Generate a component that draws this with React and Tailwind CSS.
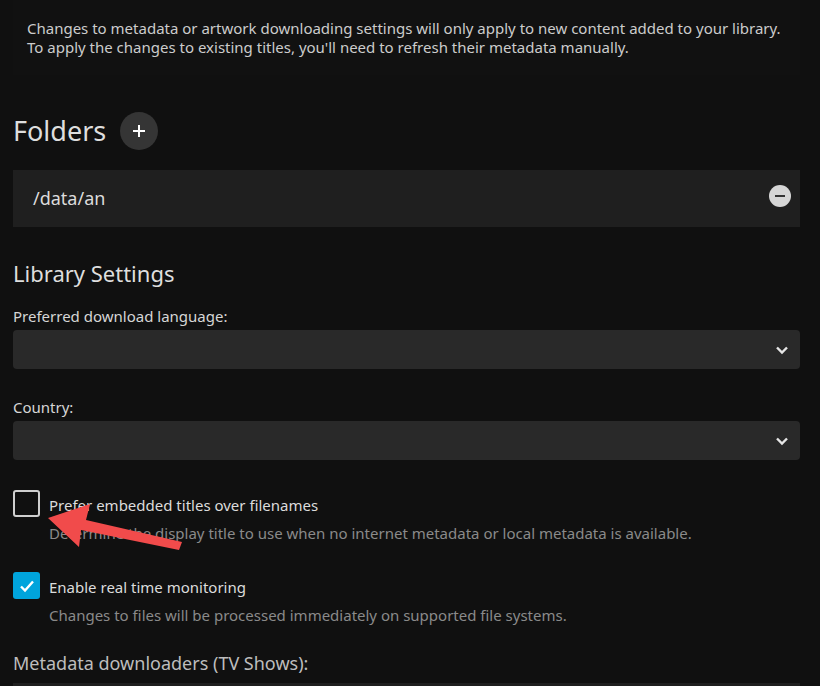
import { useState } from "react";

function Chevron() {
  return (
    <svg width="14" height="10" viewBox="0 0 14 10" className="text-[#e6e6e6]">
      <path d="M2 2.5l5 5 5-5" fill="none" stroke="currentColor" strokeWidth="2.4" />
    </svg>
  );
}

function SelectBox({ label, className = "" }) {
  return (
    <div className={className}>
      <div className="text-[15px] leading-[20px] text-[#d6d6d6]">{label}</div>
      <div className="mt-1 flex h-[39px] items-center justify-end rounded-[4px] bg-[#292929] pr-[11px]">
        <Chevron />
      </div>
    </div>
  );
}

function CheckRow({ checked, onToggle, label, desc, className = "" }) {
  return (
    <div className={className}>
      <div className="flex items-start gap-[9px]">
        <button
          type="button"
          onClick={onToggle}
          className={
            checked
              ? "flex h-[27px] w-[27px] shrink-0 items-center justify-center rounded-[3px] bg-[#00a4dc]"
              : "h-[27px] w-[27px] shrink-0 rounded-[3px] border-2 border-[#cfcfcf]"
          }
        >
          {checked && (
            <svg width="18" height="18" viewBox="0 0 18 18">
              <path d="M3 9.5l4 4 8-9" fill="none" stroke="white" strokeWidth="2.4" />
            </svg>
          )}
        </button>
        <div className="pt-[5px]">
          <div className="text-[15px] leading-[20px] text-[#dcdcdc]">{label}</div>
          <div className="mt-[8px] text-[15px] leading-[20px] text-[#8a8a8a]">{desc}</div>
        </div>
      </div>
    </div>
  );
}

export default function App() {
  const [embedded, setEmbedded] = useState(false);
  const [realtime, setRealtime] = useState(true);

  return (
    <div
      className="relative h-[686px] w-[820px] overflow-hidden bg-[#101010] text-[#dddddd]"
      style={{ fontFamily: '"Noto Sans", sans-serif' }}
    >
      <div className="mx-[13px] w-[787px] bg-[#111111] px-[14px] pt-[19px] pb-[18px] text-[15px] leading-[19px] text-[#cccccc]">
        <p>Changes to metadata or artwork downloading settings will only apply to new content added to your library.</p>
        <p>To apply the changes to existing titles, you'll need to refresh their metadata manually.</p>
      </div>

      <div className="px-[13px] pr-[20px]">
        <div className="mt-[37px] flex items-center gap-[14px]">
          <h2 className="text-[27px] leading-[38px] text-[#dedede]">Folders</h2>
          <button
            type="button"
            className="flex h-[38px] w-[38px] items-center justify-center rounded-full bg-[#353535] text-white"
          >
            <svg width="14" height="14" viewBox="0 0 14 14">
              <path d="M7 1v12M1 7h12" stroke="currentColor" strokeWidth="2" />
            </svg>
          </button>
        </div>

        <div className="mt-[20px] flex h-[57px] items-center justify-between bg-[#1f1f1f] pl-[20px] pr-[9px]">
          <span className="text-[18px] text-[#dcdcdc]">/data/an</span>
          <span className="mb-[6px] flex h-[22px] w-[22px] items-center justify-center rounded-full bg-[#d6d6d6]">
            <span className="h-[2px] w-[10px] bg-[#333333]" />
          </span>
        </div>

        <h2 className="mt-[31px] text-[22px] leading-[30px] text-[#dedede]">Library Settings</h2>

        <SelectBox label="Preferred download language:" className="mt-[18px]" />
        <SelectBox label="Country:" className="mt-[28px]" />

        <CheckRow
          className="mt-[30px]"
          checked={embedded}
          onToggle={() => setEmbedded(!embedded)}
          label="Prefer embedded titles over filenames"
          desc="Determine the display title to use when no internet metadata or local metadata is available."
        />
        <CheckRow
          className="mt-[29px]"
          checked={realtime}
          onToggle={() => setRealtime(!realtime)}
          label="Enable real time monitoring"
          desc="Changes to files will be processed immediately on supported file systems."
        />

        <div className="mt-[26px] text-[18px] leading-[24px] text-[#bdbdbd]">Metadata downloaders (TV Shows):</div>
        <div className="mt-[8px] h-[40px] bg-[#1f1f1f]" />
      </div>

      {/* red annotation arrow */}
      <svg className="pointer-events-none absolute left-0 top-0" width="820" height="686">
        <polygon
          points="48,518 90,504 86,520 182,542 179,550 81,530 79,547"
          fill="#f14b4b"
        />
      </svg>
    </div>
  );
}
